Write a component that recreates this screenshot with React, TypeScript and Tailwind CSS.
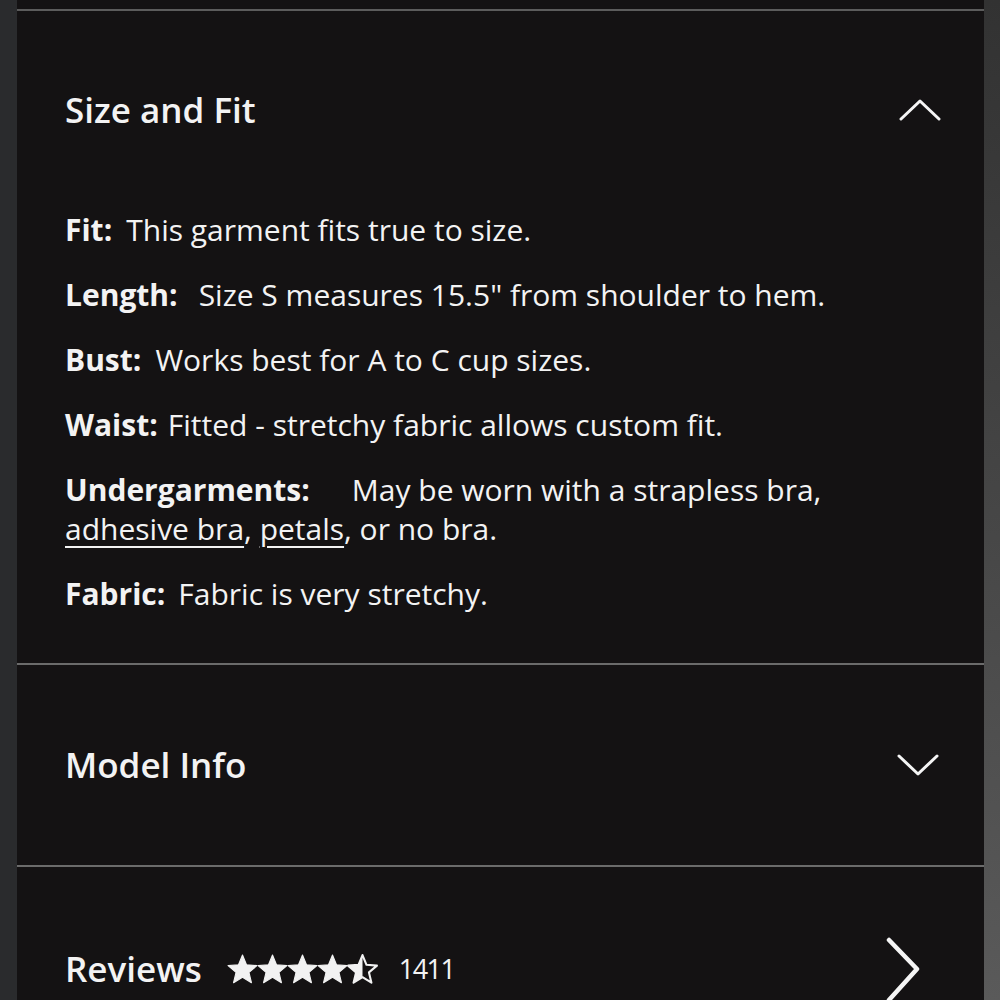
import React from 'react';

const ChevronUp = () => (
  <svg width="42" height="24" viewBox="0 0 42 24" fill="none" stroke="#f5f5f5" strokeWidth="3" strokeLinecap="round" strokeLinejoin="round">
    <path d="M2 21 L21 3 L40 21" />
  </svg>
);

const ChevronDown = () => (
  <svg width="42" height="24" viewBox="0 0 42 24" fill="none" stroke="#f5f5f5" strokeWidth="3" strokeLinecap="round" strokeLinejoin="round">
    <path d="M2 3 L21 21 L40 3" />
  </svg>
);

const ChevronRight = () => (
  <svg width="40" height="70" viewBox="0 0 40 70" fill="none" stroke="#f5f5f5" strokeWidth="4.5" strokeLinecap="round" strokeLinejoin="round">
    <path d="M5 6 L33 35 L5 66" />
  </svg>
);

const Star = ({ half = false }: { half?: boolean }) => {
  const d = 'M12 1.5 L14.9 8.6 L22.5 9.2 L16.7 14.1 L18.5 21.6 L12 17.6 L5.5 21.6 L7.3 14.1 L1.5 9.2 L9.1 8.6 Z';
  return (
    <svg width="33" height="33" viewBox="0 0 24 24">
      {half ? (
        <>
          <defs>
            <clipPath id="halfclip">
              <rect x="0" y="0" width="12" height="24" />
            </clipPath>
          </defs>
          <path d={d} fill="none" stroke="#f2f2f2" strokeWidth="1.5" strokeLinejoin="round" />
          <path d={d} fill="#f2f2f2" clipPath="url(#halfclip)" />
        </>
      ) : (
        <path d={d} fill="#f2f2f2" stroke="#f2f2f2" strokeWidth="0.8" strokeLinejoin="round" />
      )}
    </svg>
  );
};

const Row = ({ label, children, gap = 'ml-[14px]' }: { label: string; children: React.ReactNode; gap?: string }) => (
  <p className="leading-[39px]">
    <span className="font-bold">{label}</span>
    <span className={gap}>{children}</span>
  </p>
);

export default function App() {
  return (
    <div className="flex w-[1000px] h-[1000px] overflow-hidden bg-[#141213] text-[#f3f3f3]" style={{ fontFamily: '"Open Sans", Lato, sans-serif' }}>
      <div className="w-[17px] shrink-0 bg-[#2a2b2d]" />
      <div className="flex-1 flex flex-col">
        <div className="h-[9px] shrink-0" />
        <div className="h-[2px] shrink-0 bg-[#5c5c5c]" />

        <section className="shrink-0 pl-12">
          <div className="flex items-center justify-between h-[198px] pr-[43px]">
            <h2 className="text-[35px] font-semibold">Size and Fit</h2>
            <ChevronUp />
          </div>
          <div className="flex flex-col gap-[26px] text-[30px] pr-12 mt-[1px]">
            <Row label="Fit:">This garment fits true to size.</Row>
            <Row label="Length:" gap="ml-[21px]">Size S measures 15.5" from shoulder to hem.</Row>
            <Row label="Bust:">Works best for A to C cup sizes.</Row>
            <Row label="Waist:" gap="ml-[10px]">Fitted - stretchy fabric allows custom fit.</Row>
            <p className="leading-[39px]">
              <span className="font-bold">Undergarments:</span>
              <span className="ml-[42px]">May be worn with a strapless bra,</span>
              <br />
              <span className="underline underline-offset-[6px] decoration-[2px]">adhesive bra</span>,{' '}
              <span className="underline underline-offset-[6px] decoration-[2px]">petals</span>, or no bra.
            </p>
            <Row label="Fabric:" gap="ml-[13px]">Fabric is very stretchy.</Row>
          </div>
          <div className="h-[50px]" />
        </section>

        <div className="h-[2px] shrink-0 bg-[#6b6b6b]" />
        <section className="shrink-0 pl-12 flex items-center justify-between h-[200px] pr-[45px]">
          <h2 className="text-[35px] font-semibold">Model Info</h2>
          <ChevronDown />
        </section>
        <div className="h-[2px] shrink-0 bg-[#6b6b6b]" />

        <section className="shrink-0 pl-12 flex items-center justify-between pt-[67px] pr-[60px]">
          <div className="flex items-center">
            <h2 className="text-[35px] font-semibold">Reviews</h2>
            <div className="flex items-center ml-[24px] -space-x-[3px]">
              <Star />
              <Star />
              <Star />
              <Star />
              <Star half />
            </div>
            <span className="ml-[20px] text-[27px] tracking-[-1.5px]">1411</span>
          </div>
          <ChevronRight />
        </section>
      </div>
      <div className="w-[16px] shrink-0 bg-gradient-to-b from-[#323232] to-[#5a5a5a]" />
    </div>
  );
}
